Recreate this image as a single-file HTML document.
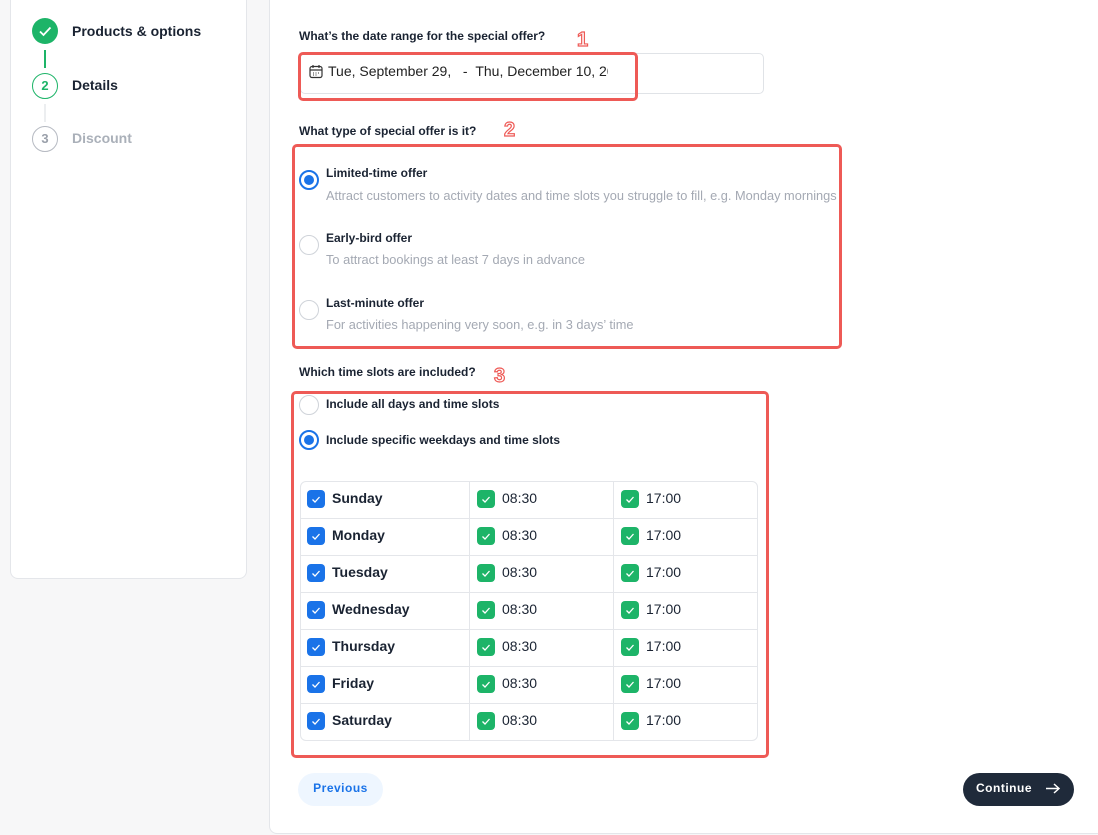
<!DOCTYPE html>
<html><head><meta charset="utf-8"><style>
*{box-sizing:border-box;margin:0;padding:0}
body{width:1098px;height:835px;background:#f7f7f8;font-family:"Liberation Sans",sans-serif;position:relative;overflow:hidden;color:#1a2332}
.a{position:absolute}
.side{left:10px;top:-10px;width:237px;height:589px;background:#fff;border:1px solid #e4e6ea;border-radius:8px}
.main{left:269px;top:-10px;width:840px;height:844px;background:#fff;border:1px solid #e4e6ea;border-radius:8px}
.lbl{font-size:12px;font-weight:bold;color:#1a2332}
.red{border:3px solid #ee5a56;border-radius:5px}
.num{color:#fff;font-size:20px;font-family:"Liberation Sans",sans-serif;font-weight:bold;-webkit-text-stroke:1.2px #ee5a56}
.radio{width:20px;height:20px;border:1px solid #cfd3d9;border-radius:50%;background:#fff}
.radio.on{border:2px solid #1a73e8}
.radio.on::after{content:"";position:absolute;left:3px;top:3px;width:10px;height:10px;border-radius:50%;background:#1a73e8}
.t{font-size:12px;font-weight:bold}
.s{font-size:12.8px;color:#a4a9b3}
.cb{width:18px;height:18px;border-radius:4px}
.cb svg{display:block}
.row{font-size:14px}
</style></head><body>
<div class="a side"></div>
<div class="a main"></div>

<div class="a" style="left:32px;top:18px;width:26px;height:26px;border-radius:50%;background:#1db468"><svg width="26" height="26"><path d="M8 13.5l3.5 3.5 7-7.5" stroke="#fff" stroke-width="1.8" fill="none"/></svg></div>
<div class="a" style="left:44px;top:50px;width:2px;height:18px;background:#1db468"></div>
<div class="a" style="left:32px;top:73px;width:26px;height:26px;border-radius:50%;border:1.5px solid #1db468;color:#1db468;font-size:13px;font-weight:bold;text-align:center;line-height:23px">2</div>
<div class="a" style="left:44px;top:104px;width:2px;height:18px;background:#eceef0"></div>
<div class="a" style="left:32px;top:126px;width:26px;height:26px;border-radius:50%;border:1.5px solid #b6bac2;color:#9aa0aa;font-size:13px;font-weight:bold;text-align:center;line-height:23px">3</div>
<div class="a" style="left:72px;top:23px;font-size:14px;font-weight:bold">Products &amp; options</div>
<div class="a" style="left:72px;top:77px;font-size:14px;font-weight:bold">Details</div>
<div class="a" style="left:72px;top:130px;font-size:14px;font-weight:bold;color:#aab0b9">Discount</div>

<div class="a lbl" style="left:299px;top:29px">What’s the date range for the special offer?</div>
<div class="a num" style="left:577px;top:29px">1</div>
<div class="a" style="left:300px;top:53px;width:464px;height:41px;border:1px solid #e0e3e7;border-radius:5px"></div>
<div class="a" style="left:309px;top:64px"><svg width="14" height="15"><rect x="1" y="2.5" width="12" height="11" rx="2" fill="none" stroke="#333" stroke-width="1.2"/><path d="M1 6h12M4 1v3M10 1v3" stroke="#333" stroke-width="1.2"/><path d="M4 9h1M6.5 9h1M9 9h1M4 11h1M6.5 11h1" stroke="#333"/></svg></div>
<div class="a" style="left:328px;top:63px;font-size:14px;width:280px;overflow:hidden;white-space:nowrap;color:#222">Tue, September 29,&nbsp;&nbsp; - &nbsp;Thu, December 10, 2020</div>
<div class="a red" style="left:298px;top:52px;width:340px;height:49px"></div>

<div class="a lbl" style="left:299px;top:124px">What type of special offer is it?</div>
<div class="a num" style="left:504px;top:119px">2</div>
<div class="a red" style="left:292px;top:144px;width:550px;height:205px"></div>
<div class="a radio on" style="left:299px;top:170px"></div>
<div class="a t" style="left:326px;top:166px">Limited-time offer</div>
<div class="a s" style="left:326px;top:188px;white-space:nowrap">Attract customers to activity dates and time slots you struggle to fill, e.g. Monday mornings</div>
<div class="a radio" style="left:299px;top:235px"></div>
<div class="a t" style="left:326px;top:231px">Early-bird offer</div>
<div class="a s" style="left:326px;top:252px">To attract bookings at least 7 days in advance</div>
<div class="a radio" style="left:299px;top:300px"></div>
<div class="a t" style="left:326px;top:296px">Last-minute offer</div>
<div class="a s" style="left:326px;top:317px">For activities happening very soon, e.g. in 3 days’ time</div>

<div class="a lbl" style="left:299px;top:365px">Which time slots are included?</div>
<div class="a num" style="left:494px;top:365px">3</div>
<div class="a red" style="left:291px;top:391px;width:478px;height:367px"></div>
<div class="a radio" style="left:299px;top:395px"></div>
<div class="a t" style="left:326px;top:397px">Include all days and time slots</div>
<div class="a radio on" style="left:299px;top:430px"></div>
<div class="a t" style="left:326px;top:433px">Include specific weekdays and time slots</div>

<div class="a" style="left:300px;top:481px;width:458px;height:260px;border:1px solid #e4e6ea;border-radius:6px;overflow:hidden">
<div class="a" style="left:168px;top:0;width:1px;height:260px;background:#e4e6ea"></div>
<div class="a" style="left:312px;top:0;width:1px;height:260px;background:#e4e6ea"></div>
</div>
<div id="rows"></div>
<script>
var d=["Sunday","Monday","Tuesday","Wednesday","Thursday","Friday","Saturday"],h="";
var ck='<svg width="18" height="18"><path d="M5.5 9.5l2.5 2.5 4.5-5" stroke="#fff" stroke-width="1.3" fill="none"/></svg>';
for(var i=0;i<7;i++){var y=481+i*37;
if(i>0)h+='<div class="a" style="left:301px;top:'+y+'px;width:456px;height:1px;background:#e4e6ea"></div>';
h+='<div class="a cb" style="left:307px;top:'+(y+9)+'px;background:#1a73e8">'+ck+'</div>';
h+='<div class="a row" style="left:332px;top:'+(y+9)+'px;font-weight:bold">'+d[i]+'</div>';
h+='<div class="a cb" style="left:477px;top:'+(y+9)+'px;background:#1db468">'+ck+'</div>';
h+='<div class="a row" style="left:502px;top:'+(y+9)+'px">08:30</div>';
h+='<div class="a cb" style="left:621px;top:'+(y+9)+'px;background:#1db468">'+ck+'</div>';
h+='<div class="a row" style="left:646px;top:'+(y+9)+'px">17:00</div>';}
document.getElementById("rows").innerHTML=h;
</script>

<div class="a" style="left:298px;top:773px;width:85px;height:33px;border-radius:17px;background:#eef6ff;color:#1a73e8;font-size:12px;font-weight:bold;text-align:center;line-height:31px;letter-spacing:.5px">Previous</div>
<div class="a" style="left:963px;top:773px;width:111px;height:33px;border-radius:17px;background:#1f2a3a;color:#fff;font-size:12px;font-weight:bold;line-height:31px;padding-left:13px;letter-spacing:.5px">Continue<svg style="position:absolute;left:82px;top:9px" width="16" height="13"><path d="M1 6.5h13M9 2l5 4.5L9 11" stroke="#fff" stroke-width="1.5" fill="none"/></svg></div>
</body></html>
